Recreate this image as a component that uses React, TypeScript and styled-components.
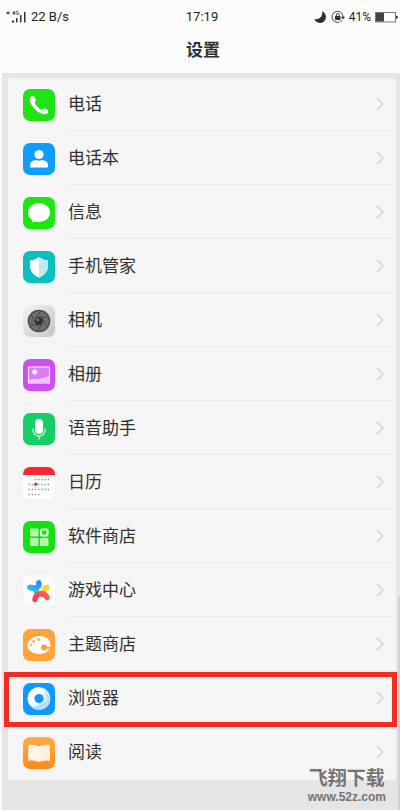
import React from 'react';
import styled, { createGlobalStyle, css } from 'styled-components';

const GlobalStyle = createGlobalStyle`
  * { box-sizing: border-box; }
  body {
    margin: 0;
    background: #e5e5e5;
    color: #303030;
    font-family: Roboto, "Noto Sans CJK SC", sans-serif;
  }
`;

const Screen = styled.div`
  position: relative;
  min-height: 100vh;
  overflow: hidden;
  border-left: 2px solid #fafafa;
  background: #e5e5e5;
`;

const Header = styled.header`
  padding-top: 7px;
  background: #fcfcfc;
`;

const StatusBar = styled.div`
  display: grid;
  grid-template-columns: 1fr auto 1fr;
  align-items: center;
  height: 20px;
  padding: 0 2px 0 4px;
  font-size: 13px;
  line-height: 20px;
  color: #222;
`;

const StatusGroup = styled.div<{ $end?: boolean }>`
  display: flex;
  align-items: center;
  gap: 4px;
  justify-content: ${(p) => (p.$end ? 'flex-end' : 'flex-start')};
`;

const StatusText = styled.span<{ $small?: boolean }>`
  font-size: ${(p) => (p.$small ? 12 : 13)}px;
  font-weight: 400;
  white-space: nowrap;
`;

const Title = styled.h1`
  margin: 0;
  height: 46px;
  padding-left: 4px;
  font-size: 17px;
  line-height: 46px;
  font-weight: 700;
  text-align: center;
`;

const List = styled.ul`
  list-style: none;
  margin: 5px 4px 30px 6px;
  padding: 0;
  border-radius: 4px;
  background: #f5f5f5;
`;

const Item = styled.li<{ $marked?: boolean }>`
  position: relative;
  ${(p) =>
    p.$marked &&
    css`
      &::after {
        content: '';
        position: absolute;
        inset: 0 -1px -1px -4px;
        border: 5px solid #f32b20;
        pointer-events: none;
        z-index: 1;
      }
    `}
`;

const RowLink = styled.a`
  display: flex;
  align-items: center;
  gap: 12px;
  height: 54px;
  padding: 0 0 1px 15px;
  color: inherit;
  text-decoration: none;
`;

const RowBody = styled.span<{ $last?: boolean }>`
  display: flex;
  flex: 1;
  align-items: center;
  justify-content: space-between;
  height: 53px;
  padding: 0 12px 0 1px;
  border-bottom: 1px solid ${(p) => (p.$last ? 'transparent' : '#ebebeb')};
`;

const Label = styled.span`
  font-size: 17px;
  line-height: 24px;
`;

const AppIcon = styled.svg`
  display: block;
  flex: none;
  width: 32px;
  height: 32px;
  border-radius: 7px;
`;

const Glyph = styled.svg`
  display: block;
  flex: none;
`;

const ScrollThumb = styled.div`
  position: absolute;
  right: 0;
  top: 597px;
  bottom: 0;
  width: 2px;
  background: #d2d2d2;
`;

const Watermark = styled.div`
  position: absolute;
  right: 14px;
  bottom: 6px;
  z-index: 2;
  display: flex;
  flex-direction: column;
  align-items: center;
  color: #747474;
  font-weight: 700;
`;

const WatermarkName = styled.div`
  font-family: "Noto Sans CJK SC", sans-serif;
  font-size: 19px;
  line-height: 26px;
`;

const WatermarkSite = styled.div`
  font-family: "Liberation Sans", sans-serif;
  font-size: 12px;
  line-height: 14px;
`;

const Signal = () => (
  <Glyph width="21" height="14" viewBox="0 0 21 14" fill="#333" aria-hidden="true">
    <path d="M0 3 2.500 1.200V2.400H4V3.500H2.500V4.700Z" />
    <path d="M8.300 1 6.500 3.600H8.700M8.300 1V5M12.500 1.600C10.700.6 10 1.800 10 3S11 5 12.700 4.300V3.100H11.500" fill="none" stroke="#333" strokeWidth=".8" />
    <rect x="6" y="10.500" width="2" height="2" />
    <rect x="10" y="8" width="1.500" height="4.500" />
    <rect x="14" y="5" width="1.500" height="7.500" />
    <rect x="18" y="2" width="1.500" height="10.500" />
  </Glyph>
);

const Moon = () => (
  <Glyph width="13" height="12" viewBox="0 0 13 12" aria-hidden="true">
    <path d="M8 .3A6 6 0 1 1 .3 8C4.800 9.300 9.300 5.500 8 .3Z" fill="#303030" />
  </Glyph>
);

const RotationLock = () => (
  <Glyph width="14" height="14" viewBox="0 0 14 14" fill="none" stroke="#444" aria-hidden="true">
    <path d="M8.500 12A5.500 5.500 0 1 1 12 7.500" />
    <path d="M10 6.800H14L12 9.500Z" fill="#333" stroke="none" />
    <path d="M9.500 11.500 11 10.300" />
    <path d="M5.300 6.500V5A1.500 1.500 0 0 1 8.300 5V6.500" />
    <rect x="4" y="6" width="5.500" height="4" fill="#333" stroke="none" />
  </Glyph>
);

const Battery = () => (
  <Glyph width="23" height="11" viewBox="0 0 23 11" aria-hidden="true">
    <rect x=".5" y=".5" width="20" height="9.500" fill="#fff" stroke="#777" />
    <rect x="1" y="1" width="8" height="8.500" fill="#444" />
    <path d="M21 3.500 23 4.500V6L21 7Z" fill="#444" />
  </Glyph>
);

const Chevron = () => (
  <Glyph width="8" height="14" viewBox="0 0 8 14" fill="none" stroke="#d0d0d0" strokeWidth="1.400" aria-hidden="true">
    <path d="M1 1 7 7 1 13" />
  </Glyph>
);

const BLADES = [0, 60, 120, 180, 240, 300];

const icons: Record<string, React.ReactNode> = {
  phone: (
    <>
      <rect width="32" height="32" fill="#20e316" />
      <path d="M8.300 7.600C10 6 12 7.800 12.800 10.200C13.300 11.800 11.600 12.500 11.900 13.700C12.500 16 16 19.800 18.500 20.600C19.800 20.800 20.300 19.100 22 19.600C24.600 20.400 26.300 22.300 24.600 24C22.700 25.800 19.500 25.700 15.800 23.300C11.400 20.400 7.700 15.900 6.900 12C6.500 10 7 8.600 8.300 7.600Z" fill="#fff" />
    </>
  ),
  contacts: (
    <>
      <rect width="32" height="32" fill="#0c9dff" />
      <circle cx="16" cy="11.500" r="4.600" fill="#fff" />
      <path d="M7 24.500V22C7 18.500 10.500 17.300 13 17Q16 18.500 19 17C21.500 17.300 25 18.500 25 22V24.500Z" fill="#fff" />
    </>
  ),
  messages: (
    <>
      <rect width="32" height="32" fill="#1de60e" />
      <ellipse cx="16" cy="15.500" rx="11" ry="9.500" fill="#fff" />
      <path d="M9 21.500Q10.200 23.500 8.800 25.300Q12 25.500 14.500 23.500Z" fill="#fff" />
    </>
  ),
  guard: (
    <>
      <rect width="32" height="32" fill="#0bbfc0" />
      <path d="M16 6.200Q20.500 9.200 25 9.400V15C25 20.500 21 24.500 16 26.500C11 24.500 7 20.500 7 15V9.400Q11.500 9.200 16 6.200Z" fill="#fff" />
      <path d="M16 6.200Q20.500 9.200 25 9.400V15C25 20.500 21 24.500 16 26.500Z" fill="#bcecec" />
    </>
  ),
  camera: (
    <>
      <defs>
        <linearGradient id="cameraBody" x1="0" y1="0" x2="1" y2="1">
          <stop offset="0" stopColor="#f5f5f5" />
          <stop offset="1" stopColor="#c4c4c4" />
        </linearGradient>
      </defs>
      <rect width="32" height="32" fill="url(#cameraBody)" />
      <circle cx="16" cy="16" r="11.300" fill="#44484a" />
      <circle cx="16" cy="16" r="10" fill="#6c7072" />
      {BLADES.map((angle) => (
        <path key={angle} d="M16 11.800 24.500 12.300" transform={`rotate(${angle} 16 16)`} fill="none" stroke="#3f4345" strokeWidth=".9" />
      ))}
      <circle cx="16" cy="16" r="3.900" fill="#303438" />
      <circle cx="14.800" cy="14.800" r="1.400" fill="#7b858a" />
    </>
  ),
  album: (
    <>
      <rect width="32" height="32" fill="#cb50f4" />
      <rect x="5.500" y="8" width="21" height="16" fill="#dc7cf8" stroke="#f9e4ff" strokeWidth="1.200" />
      <circle cx="11.800" cy="13" r="2.500" fill="#fff" />
      <path d="M6 21Q9 19.500 12 20Q19 20.500 26 17V23.500H6Z" fill="#f1c4fb" />
    </>
  ),
  voice: (
    <>
      <rect width="32" height="32" fill="#15cf64" />
      <rect x="12" y="6" width="8" height="15" rx="4" fill="#fff" />
      <path d="M10 15.500V17A6 6 0 0 0 22 17V15.500M16 23V26.500" fill="none" stroke="#c8f5db" strokeWidth="1.300" />
    </>
  ),
  calendar: (
    <>
      <rect width="32" height="32" fill="#fff" />
      <rect width="32" height="8" fill="#f72832" />
      <g stroke="#929292" strokeWidth="1.300" strokeDasharray="1.300 1.900">
        <path d="M12 12.500H28M5.500 17.500H28M5.500 22.500H28M5.500 27.500H17" />
      </g>
      <circle cx="12.800" cy="17.200" r="1.600" fill="#d6222a" />
    </>
  ),
  apps: (
    <>
      <rect width="32" height="32" fill="#16df13" />
      <rect x="7" y="7.500" width="8.500" height="8" rx="1" fill="#b5f7af" />
      <rect x="7" y="17" width="8.500" height="8" rx="1" fill="#b5f7af" />
      <rect x="17" y="17" width="8.500" height="8" rx="1" fill="#b5f7af" />
      <rect x="18" y="8.500" width="6.500" height="6" rx=".8" fill="none" stroke="#fff" strokeWidth="2" />
    </>
  ),
  games: (
    <>
      <defs>
        <linearGradient id="gameBlue" gradientUnits="userSpaceOnUse" x1="5" y1="16" x2="17" y2="6">
          <stop offset="0" stopColor="#31c5e6" />
          <stop offset="1" stopColor="#3487f3" />
        </linearGradient>
        <linearGradient id="gameRed" gradientUnits="userSpaceOnUse" x1="11" y1="26" x2="25" y2="18">
          <stop offset="0" stopColor="#f43b5f" />
          <stop offset="1" stopColor="#ff6552" />
        </linearGradient>
      </defs>
      <rect width="32" height="32" fill="#fafafa" />
      <g fill="none" strokeLinecap="round" strokeLinejoin="round" strokeWidth="5.400">
        <path d="M20.500 17Q20.500 13 24 12.500" stroke="#ffd12f" />
        <path d="M13.500 17Q13 13 7 12.500" stroke="#31d0d8" />
        <path d="M15.800 7.800Q17 11.500 12.500 13.300L7 12.500" stroke="url(#gameBlue)" />
        <path d="M12 24.500Q13 19 18 18.800Q22.800 18.800 24 22.500" stroke="url(#gameRed)" />
      </g>
      <circle cx="17.500" cy="14.500" r="1.200" fill="#fff" />
    </>
  ),
  themes: (
    <>
      <rect width="32" height="32" fill="#ffa43b" />
      <path d="M16 7C22 6.500 27.500 10.500 27.500 16C27.500 21.500 22 25.500 15.500 25C9 24.200 4.500 21 4.500 16.500C4.500 11.500 9.500 7.500 16 7Z" fill="#fff" />
      <g fill="#ffb861">
        <circle cx="8" cy="16" r="1.300" />
        <circle cx="10.700" cy="12.300" r="1.600" />
        <circle cx="15.500" cy="10.500" r="1.700" />
      </g>
      <circle cx="21" cy="18.500" r="2.900" fill="#ff9a35" />
      <path d="M23 17.800H28V20L23 19.500Z" fill="#ffa43b" />
    </>
  ),
  browser: (
    <>
      <rect width="32" height="32" fill="#0b99ff" />
      <circle cx="16" cy="15.500" r="11.300" fill="#d9edff" />
      <path d="M16 4.200A11.300 11.300 0 0 0 7.500 23Q11 24 14 21L16 15.500L21 11Q22 7 16 4.200Z" fill="#fff" />
      <path d="M8 23.500A11.300 11.300 0 0 0 27.300 15.500Q26 11 23 10Q26 18 19.500 21Q14 24.500 8 23.500Z" fill="#b7dcff" />
      <circle cx="16" cy="15.500" r="4.600" fill="#1795f5" />
    </>
  ),
  reading: (
    <>
      <defs>
        <linearGradient id="readingCover" x1="0" y1="0" x2="0" y2="1">
          <stop offset="0" stopColor="#ffad43" />
          <stop offset="1" stopColor="#f98b1d" />
        </linearGradient>
      </defs>
      <rect width="32" height="32" fill="url(#readingCover)" />
      <path d="M5.500 8Q11.500 7 16 9.500Q20.500 7 26.500 8L27 23.500Q20.500 22.500 16 25Q11.500 22.500 5 23.500Z" fill="#fff8ea" />
      <path d="M16 9.500Q20.500 7 26.500 8L27 23.500Q20.500 22.500 16 25Z" fill="#fff0d8" />
    </>
  ),
};

const rows = [
  { id: 'phone', label: '电话' },
  { id: 'contacts', label: '电话本' },
  { id: 'messages', label: '信息' },
  { id: 'guard', label: '手机管家' },
  { id: 'camera', label: '相机' },
  { id: 'album', label: '相册' },
  { id: 'voice', label: '语音助手' },
  { id: 'calendar', label: '日历' },
  { id: 'apps', label: '软件商店' },
  { id: 'games', label: '游戏中心' },
  { id: 'themes', label: '主题商店' },
  { id: 'browser', label: '浏览器', marked: true },
  { id: 'reading', label: '阅读' },
];

export default function App() {
  return (
    <>
      <GlobalStyle />
      <Screen>
        <Header>
          <StatusBar>
            <StatusGroup>
              <Signal />
              <StatusText>22 B/s</StatusText>
            </StatusGroup>
            <StatusText>17:19</StatusText>
            <StatusGroup $end>
              <Moon />
              <RotationLock />
              <StatusText $small>41%</StatusText>
              <Battery />
            </StatusGroup>
          </StatusBar>
          <Title>设置</Title>
        </Header>
        <main>
          <List>
            {rows.map((row, index) => (
              <Item key={row.id} $marked={row.marked}>
                <RowLink href={`#${row.id}`}>
                  <AppIcon viewBox="0 0 32 32" aria-hidden="true">
                    {icons[row.id]}
                  </AppIcon>
                  <RowBody $last={index === rows.length - 1}>
                    <Label>{row.label}</Label>
                    <Chevron />
                  </RowBody>
                </RowLink>
              </Item>
            ))}
          </List>
        </main>
        <ScrollThumb />
        <Watermark>
          <WatermarkName>飞翔下载</WatermarkName>
          <WatermarkSite>www.52z.com</WatermarkSite>
        </Watermark>
      </Screen>
    </>
  );
}
